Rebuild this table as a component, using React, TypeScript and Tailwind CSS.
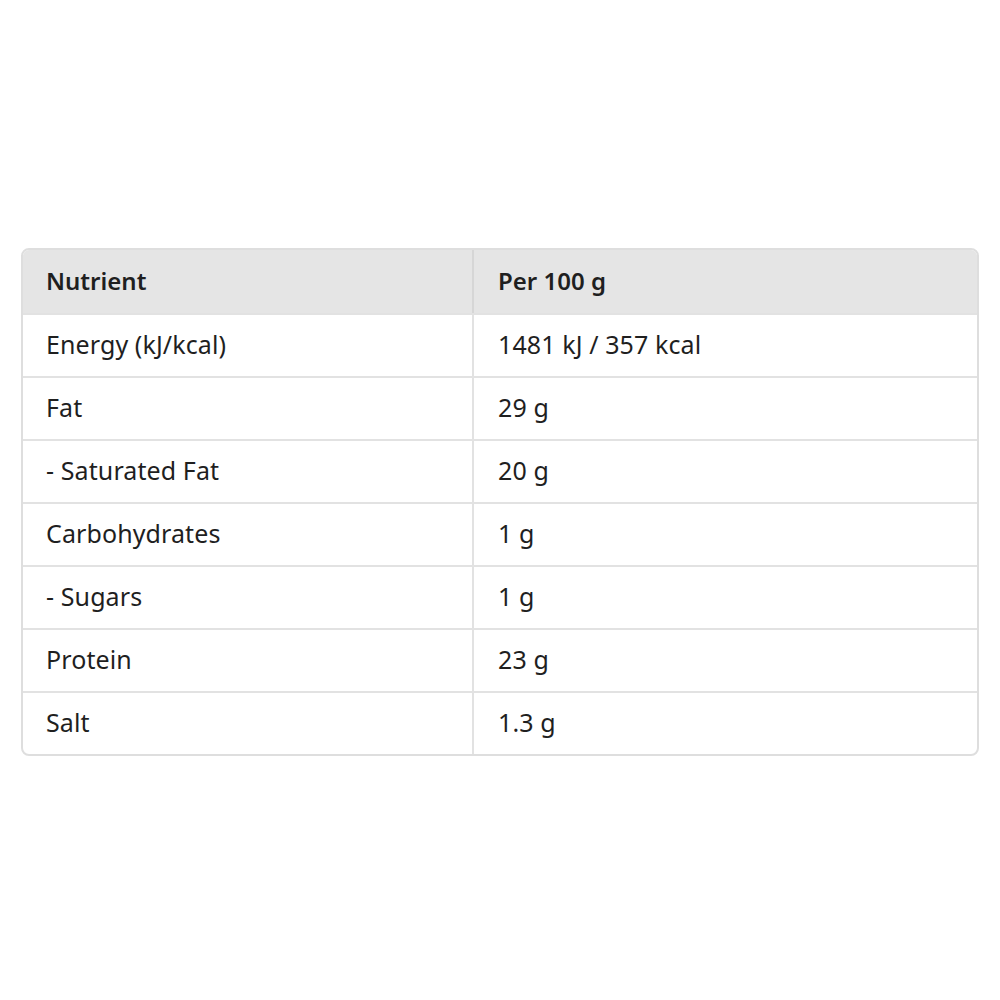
const ROWS: [string, string][] = [
  ["Energy (kJ/kcal)", "1481 kJ / 357 kcal"],
  ["Fat", "29 g"],
  ["- Saturated Fat", "20 g"],
  ["Carbohydrates", "1 g"],
  ["- Sugars", "1 g"],
  ["Protein", "23 g"],
  ["Salt", "1.3 g"],
];

export default function App() {
  return (
    <div
      className="flex h-[1000px] w-full items-center bg-white px-[21px] text-[#1f1f1f]"
      style={{ fontFamily: '"Noto Sans", "Open Sans", sans-serif' }}
    >
      <div className="mt-[3px] w-full overflow-hidden rounded-lg border-2 border-[#dedede]">
        <div className="grid h-[63px] grid-cols-[451px_1fr] bg-[#e5e5e5] text-[24px] font-semibold">
          <div className="flex items-center border-r-2 border-[#d6d6d6] pl-[23px]">Nutrient</div>
          <div className="flex items-center pl-[24px]">Per 100 g</div>
        </div>
        {ROWS.map(([name, value]) => (
          <div
            key={name}
            className="grid h-[63px] grid-cols-[451px_1fr] border-t-2 border-[#e2e2e2] text-[25px] tracking-[0.1px]"
          >
            <div className="flex items-center border-r-2 border-[#e2e2e2] pl-[23px]">{name}</div>
            <div className="flex items-center pl-[24px]">{value}</div>
          </div>
        ))}
      </div>
    </div>
  );
}
